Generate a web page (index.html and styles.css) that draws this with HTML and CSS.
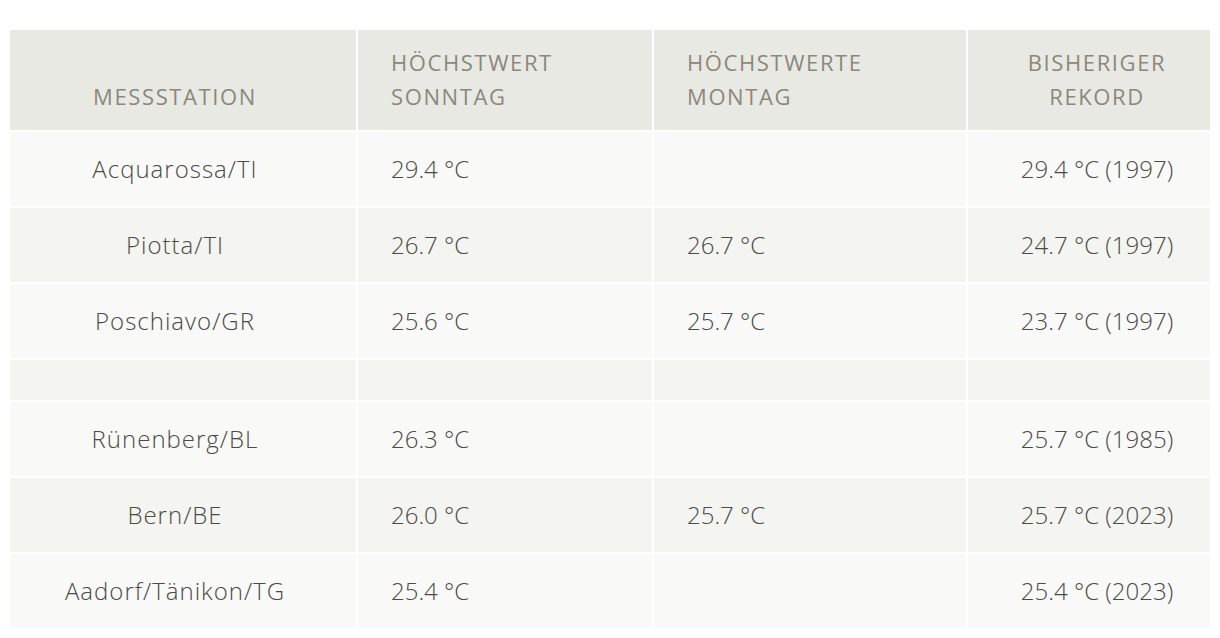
FILE: index.html
```html
<!DOCTYPE html>
<html lang="de">
<head>
<meta charset="utf-8">
<title>Hitzerekorde</title>
<link rel="stylesheet" href="styles.css">
</head>
<body>
<table class="records">
  <colgroup>
    <col class="c-station">
    <col class="c-sun">
    <col class="c-mon">
    <col class="c-rec">
  </colgroup>
  <thead>
    <tr>
      <th class="station">Messstation</th>
      <th class="val">Höchstwert<br>Sonntag</th>
      <th class="val">Höchstwerte<br>Montag</th>
      <th class="rec">Bisheriger<br>Rekord</th>
    </tr>
  </thead>
  <tbody>
    <tr>
      <td class="station">Acquarossa/TI</td>
      <td class="val">29.4 °C</td>
      <td class="val"></td>
      <td class="rec">29.4 °C (1997)</td>
    </tr>
    <tr>
      <td class="station">Piotta/TI</td>
      <td class="val">26.7 °C</td>
      <td class="val">26.7 °C</td>
      <td class="rec">24.7 °C (1997)</td>
    </tr>
    <tr>
      <td class="station">Poschiavo/GR</td>
      <td class="val">25.6 °C</td>
      <td class="val">25.7 °C</td>
      <td class="rec">23.7 °C (1997)</td>
    </tr>
    <tr class="spacer">
      <td></td><td></td><td></td><td></td>
    </tr>
    <tr>
      <td class="station">Rünenberg/BL</td>
      <td class="val">26.3 °C</td>
      <td class="val"></td>
      <td class="rec">25.7 °C (1985)</td>
    </tr>
    <tr>
      <td class="station">Bern/BE</td>
      <td class="val">26.0 °C</td>
      <td class="val">25.7 °C</td>
      <td class="rec">25.7 °C (2023)</td>
    </tr>
    <tr>
      <td class="station">Aadorf/Tänikon/TG</td>
      <td class="val">25.4 °C</td>
      <td class="val"></td>
      <td class="rec">25.4 °C (2023)</td>
    </tr>
  </tbody>
</table>
</body>
</html>
```
FILE: styles.css
```css
html, body {
  background: #ffffff;
}
body {
  margin: 8px;
  font-family: "Open Sans", "Noto Sans", sans-serif;
}
.records {
  margin-top: 20px;
  width: 1204px;
  table-layout: fixed;
  border-collapse: separate;
  border-spacing: 2px;
}
.c-station { width: 346px; }
.c-sun { width: 294px; }
.c-mon { width: 312px; }
.c-rec { width: 242px; }

.records th {
  height: 100px;
  box-sizing: border-box;
  background: #e9e9e4;
  color: #8a887c;
  font-size: 22px;
  font-weight: 400;
  line-height: 34px;
  letter-spacing: 1.6px;
  text-transform: uppercase;
  vertical-align: bottom;
  padding: 0 0 17px 0;
}
.records td {
  height: 74px;
  box-sizing: border-box;
  padding: 0;
  color: #4b4b45;
  font-size: 24px;
  font-weight: 300;
  line-height: 32px;
  vertical-align: middle;
}
.records tbody tr:nth-child(odd) td { background: #f9f9f7; }
.records tbody tr:nth-child(even) td { background: #f4f4f1; }
.records tbody tr.spacer td { height: 40px; }

.station {
  text-align: center;
  padding-left: 0;
  padding-right: 16px !important;
}
.records td.station {
  letter-spacing: 1px;
}
.val {
  text-align: left;
  padding-left: 33px !important;
}
.rec {
  text-align: center;
  padding-left: 16px !important;
}
```
